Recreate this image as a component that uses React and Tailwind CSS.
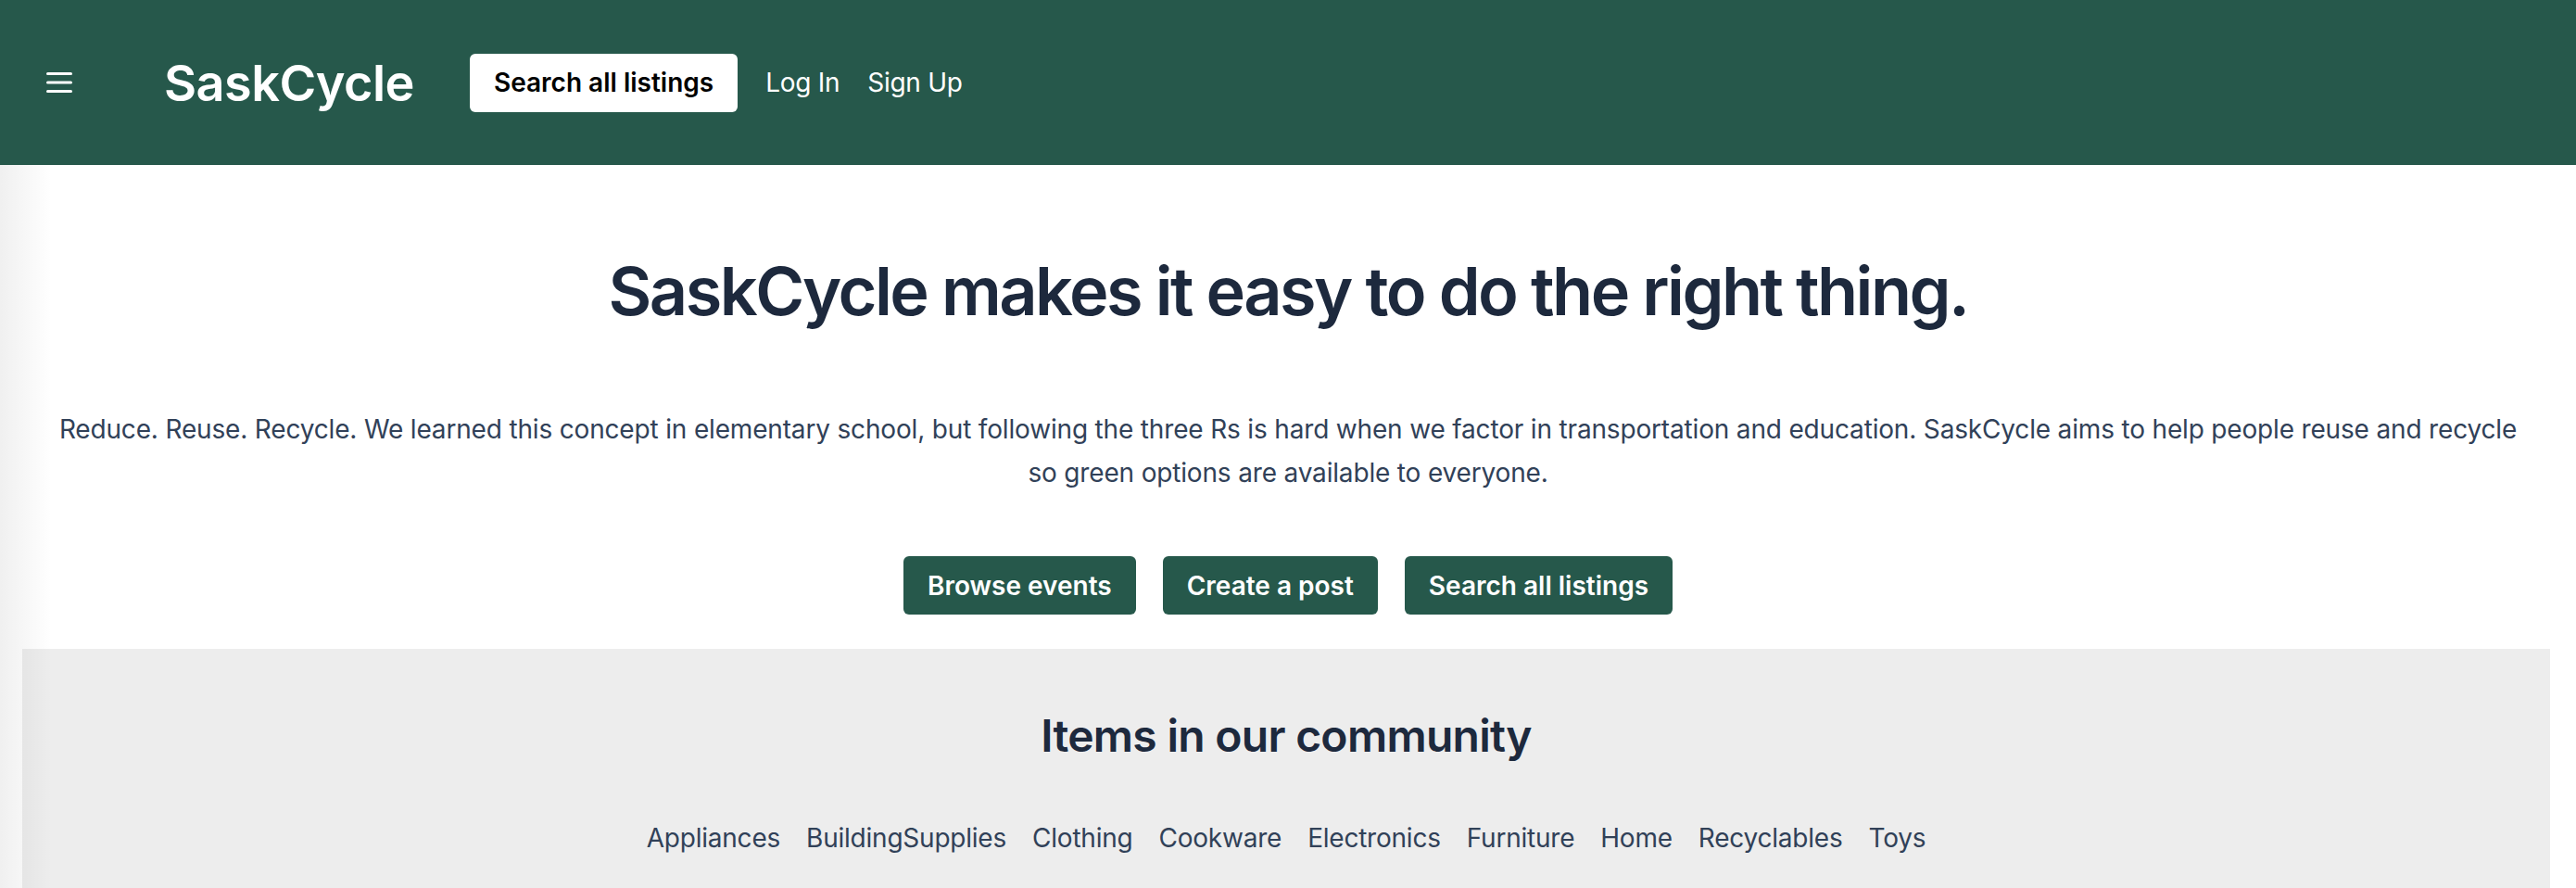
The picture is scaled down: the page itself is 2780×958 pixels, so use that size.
import React from "react";

const categories = [
  "Appliances",
  "BuildingSupplies",
  "Clothing",
  "Cookware",
  "Electronics",
  "Furniture",
  "Home",
  "Recyclables",
  "Toys",
];

function MenuIcon() {
  return (
    <svg width="28" height="22" viewBox="0 0 28 22" fill="white">
      <rect x="0" y="0" width="28" height="3" rx="1.5" />
      <rect x="0" y="9.5" width="28" height="3" rx="1.5" />
      <rect x="0" y="19" width="28" height="3" rx="1.5" />
    </svg>
  );
}

function Navbar() {
  return (
    <header className="h-[178px] bg-[#26584b] flex items-center pl-[50px]">
      <button className="mr-[99px]">
        <MenuIcon />
      </button>
      <a
        href="#"
        className="text-[54px] font-semibold tracking-[-0.01em] text-white mr-[60px]"
      >
        SaskCycle
      </a>
      <a
        href="#"
        className="h-[63px] px-[26px] flex items-center bg-white text-black text-[28px] font-semibold rounded-md mr-[30px]"
      >
        Search all listings
      </a>
      <a href="#" className="text-[28px] text-white tracking-[-0.01em] mr-[30px]">
        Log In
      </a>
      <a href="#" className="text-[28px] text-white tracking-[-0.01em]">
        Sign Up
      </a>
    </header>
  );
}

function App() {
  return (
    <div
      className="min-h-screen bg-white relative"
      style={{ fontFamily: "Inter, 'Noto Sans', sans-serif" }}
    >
      <Navbar />
      <div className="absolute left-0 top-[178px] bottom-0 w-[56px] bg-gradient-to-r from-black/[0.06] to-transparent pointer-events-none" />

      <section className="pt-[100px] px-[56px] text-center">
        <h1 className="text-[72px] leading-none font-semibold tracking-[-0.035em] text-slate-800">
          SaskCycle makes it easy to do the right thing.
        </h1>
        <p className="mt-[90px] text-[28px] leading-[47px] tracking-[-0.006em] text-slate-700">
          Reduce. Reuse. Recycle. We learned this concept in elementary school,
          but following the three Rs is hard when we factor in transportation
          and education. SaskCycle aims to help people reuse and recycle so
          green options are available to everyone.
        </p>
        <div className="mt-[66px] flex justify-center gap-[29px]">
          <a
            href="#"
            className="h-[63px] px-[26px] flex items-center bg-[#26584b] text-white text-[28px] font-semibold rounded-md"
          >
            Browse events
          </a>
          <a
            href="#"
            className="h-[63px] px-[26px] flex items-center bg-[#26584b] text-white text-[28px] font-semibold rounded-md"
          >
            Create a post
          </a>
          <a
            href="#"
            className="h-[63px] px-[26px] flex items-center bg-[#26584b] text-white text-[28px] font-semibold rounded-md"
          >
            Search all listings
          </a>
        </div>
      </section>

      <section className="mt-[37px] ml-[24px] mr-[28px] bg-[#ededed] pt-[70px] pb-[60px] text-center">
        <h2 className="text-[48px] leading-none font-semibold tracking-[-0.015em] text-slate-800">
          Items in our community
        </h2>
        <div className="mt-[65px] flex justify-center gap-[28px] text-[28px] leading-[42px] tracking-[-0.008em] text-slate-700">
          {categories.map((c) => (
            <a href="#" key={c}>
              {c}
            </a>
          ))}
        </div>
      </section>
    </div>
  );
}

export default App;
